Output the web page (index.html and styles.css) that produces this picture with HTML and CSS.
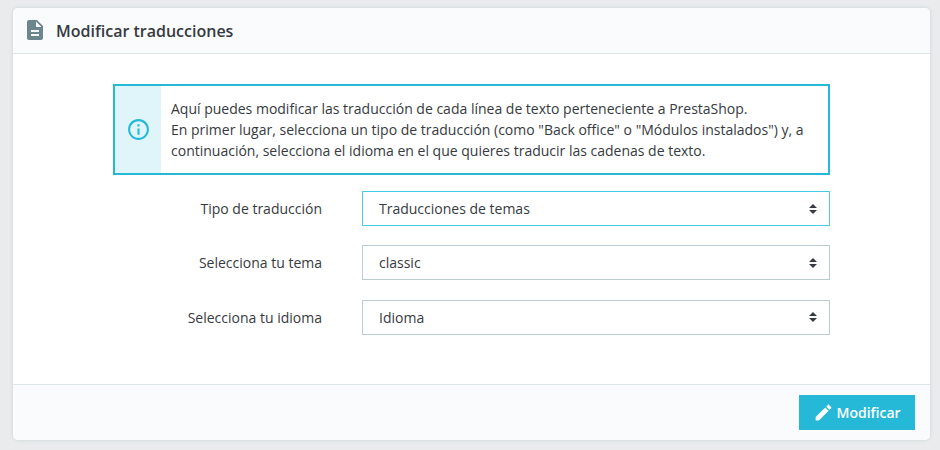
FILE: index.html
```html
<!DOCTYPE html>
<html lang="es">
<head>
<meta charset="utf-8">
<title>Modificar traducciones</title>
<link rel="stylesheet" href="styles.css">
</head>
<body>
<form class="card">
  <h3 class="card-header">
    <svg class="header-icon" viewBox="0 0 24 24"><path d="M14 2H6c-1.100 0-1.990.9-1.990 2L4 20c0 1.100.89 2 1.990 2H18c1.100 0 2-.9 2-2V8l-6-6zm2 16H8v-2h8v2zm0-4H8v-2h8v2zm-3-5V3.500L18.500 9H13z"/></svg>
    <span class="card-title">Modificar traducciones</span>
  </h3>
  <div class="card-body">
    <div class="alert">
      <div class="alert-icon"><svg viewBox="0 0 24 24"><path d="M11 17h2v-6h-2v6zm1-15C6.480 2 2 6.480 2 12s4.480 10 10 10 10-4.480 10-10S17.520 2 12 2zm0 18c-4.410 0-8-3.590-8-8s3.590-8 8-8 8 3.590 8 8-3.590 8-8 8zM11 9h2V7h-2v2z"/></svg></div>
      <p class="alert-text">Aquí puedes modificar las traducción de cada línea de texto perteneciente a PrestaShop.<br>En primer lugar, selecciona un tipo de traducción (como "Back office" o "Módulos instalados") y, a<br>continuación, selecciona el idioma en el que quieres traducir las cadenas de texto.</p>
    </div>
    <div class="row row-type">
      <span class="label">Tipo de traducción</span>
      <div class="select active"><span>Traducciones de temas</span><svg class="arrows" viewBox="0 0 8 10"><path d="M4 0 8 4H0zM0 6h8l-4 4z"/></svg></div>
    </div>
    <div class="row row-theme">
      <span class="label">Selecciona tu tema</span>
      <div class="select"><span>classic</span><svg class="arrows" viewBox="0 0 8 10"><path d="M4 0 8 4H0zM0 6h8l-4 4z"/></svg></div>
    </div>
    <div class="row row-language">
      <span class="label">Selecciona tu idioma</span>
      <div class="select"><span>Idioma</span><svg class="arrows" viewBox="0 0 8 10"><path d="M4 0 8 4H0zM0 6h8l-4 4z"/></svg></div>
    </div>
  </div>
  <div class="card-footer">
    <button type="button" class="button"><svg viewBox="0 0 24 24"><path d="M3 17.250V21h3.750L17.810 9.940l-3.750-3.750L3 17.250zM20.710 7.040c.39-.39.39-1.020 0-1.410l-2.340-2.340c-.39-.39-1.020-.39-1.410 0l-1.830 1.830 3.750 3.750 1.830-1.830z"/></svg><span>Modificar</span></button>
  </div>
</form>
</body>
</html>
```

FILE: styles.css
```css
* { box-sizing: border-box; }
body {
  margin: 0;
  padding: 8px 10px 10px 13px;
  height: 450px;
  overflow: hidden;
  background: #eaebec;
  color: #363a41;
  font: 14px/21px "Open Sans", sans-serif;
}
svg { fill: currentColor; flex: none; }
.card {
  display: flex;
  flex-direction: column;
  height: 432px;
  background: #fff;
  border-radius: 5px;
  box-shadow: 0 0 3px rgba(150, 190, 195, 0.35), 0 0 6px rgba(0, 0, 0, 0.04);
  overflow: hidden;
}
.card-header {
  display: flex;
  align-items: center;
  gap: 9px;
  height: 46px;
  margin: 0;
  padding: 0 10px;
  background: #fafbfc;
  border-bottom: 1px solid #dbe6e9;
  font-size: 16px;
  font-weight: 600;
}
.card-title { padding-top: 2px; }
.header-icon { width: 24px; height: 24px; margin-bottom: 2px; color: #6c868e; }
.card-body { flex: 1; padding: 30px 100px 0; }
.alert {
  display: flex;
  height: 91px;
  margin-bottom: 16px;
  border: 2px solid #25b9d7;
}
.alert-icon {
  display: flex;
  align-items: center;
  justify-content: center;
  width: 46px;
  background: #dff5f9;
  color: #25b9d7;
}
.alert-icon svg { width: 25px; height: 25px; margin-bottom: 1px; }
.alert-text { margin: 0; padding: 12px 0 0 10px; white-space: nowrap; }
.row {
  display: grid;
  grid-template-columns: 209px 468px;
  column-gap: 40px;
  align-items: center;
}
.row-type { margin-bottom: 19px; }
.row-theme { margin-bottom: 20px; }
.row-language .arrows { margin-bottom: 2px; }
.label { text-align: right; }
.select {
  display: flex;
  align-items: center;
  justify-content: space-between;
  height: 35px;
  padding: 0 12px 0 16px;
  border: 1px solid #bbcdd2;
}
.select.active { border-color: #48cbe6; }
.arrows { width: 8px; height: 10px; }
.card-footer {
  display: flex;
  justify-content: flex-end;
  align-items: flex-start;
  height: 56px;
  padding: 10px 15px;
  background: #fafbfc;
  border-top: 1px solid #dbe6e9;
}
.button {
  display: flex;
  align-items: center;
  gap: 2.500px;
  width: 116px;
  height: 35px;
  padding: 0 0 0 14px;
  border: 0;
  background: #25b9d7;
  color: #fff;
  font: 600 14px/21px "Open Sans", sans-serif;
}
.button svg { width: 21px; height: 21px; }
```
